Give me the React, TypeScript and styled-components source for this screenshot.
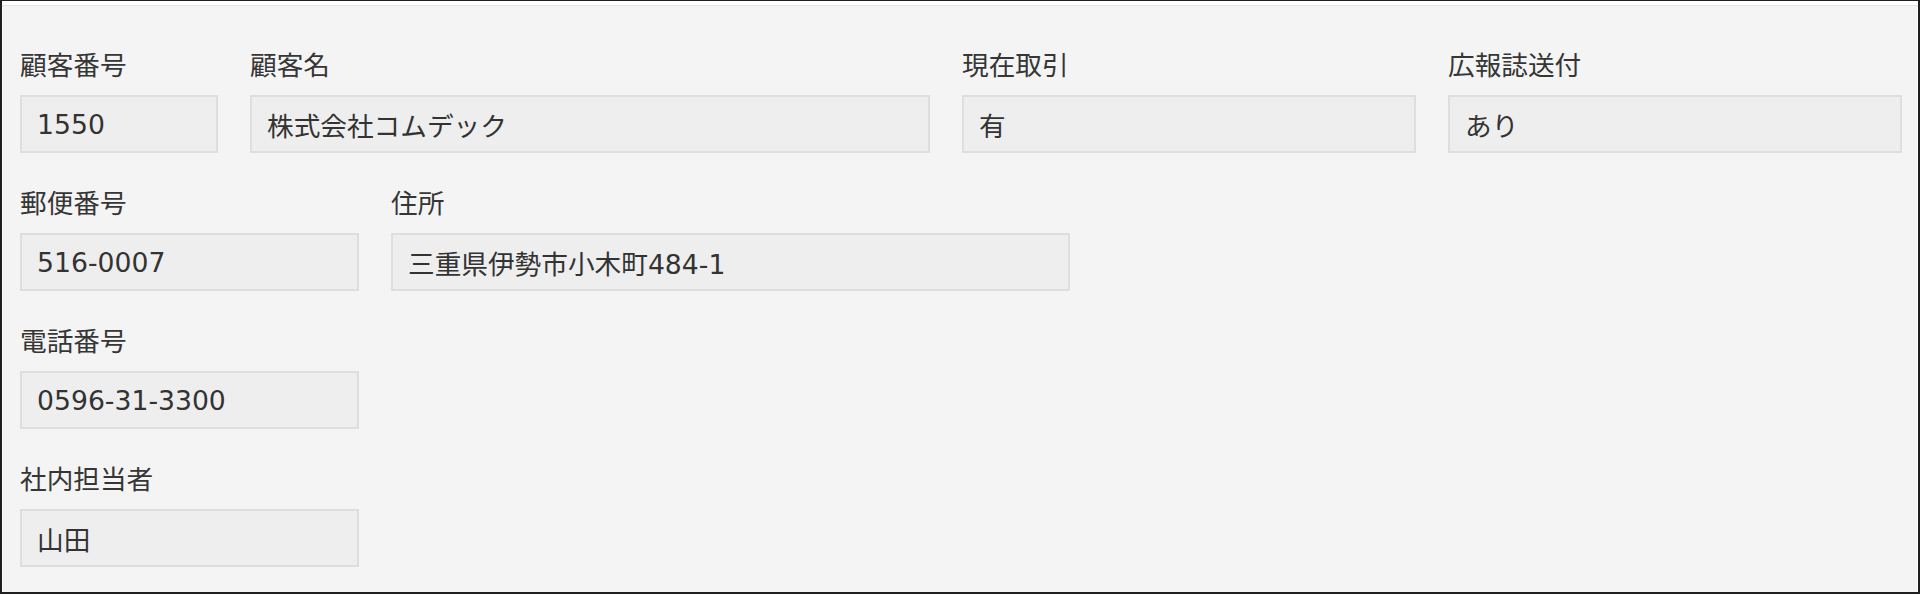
import React from "react";
import styled, { createGlobalStyle } from "styled-components";

const GlobalStyle = createGlobalStyle`
  html, body {
    margin: 0;
    padding: 0;
    background: #f4f4f4;
  }
  body {
    font-family: "DejaVu Sans", "Noto Sans CJK JP", sans-serif;
  }
`;

const Frame = styled.div`
  width: 1920px;
  height: 594px;
  box-sizing: border-box;
  border: 2px solid #1f1f1f;
  border-top-width: 1px;
  background: #f4f4f4;
  display: flex;
  flex-direction: column;
`;

const TopBand = styled.div`
  height: 4px;
  background: #ffffff;
  border-bottom: 1px solid #e4e4e4;
  flex: none;
`;

const Body = styled.div`
  flex: 1;
  border-left: 1px solid #fafafa;
  border-right: 1px solid #ffffff;
  padding: 42px 0 0 17px;
  display: flex;
  flex-direction: column;
  gap: 33px;
`;

const Row = styled.div`
  display: flex;
  gap: 32px;
`;

const Field = styled.div<{ $w: number }>`
  display: flex;
  flex-direction: column;
  width: ${(p) => p.$w}px;
  flex: none;
`;

const Label = styled.div`
  font-size: 26.67px;
  line-height: 36px;
  height: 36px;
  margin-bottom: 11px;
  color: #363636;
  white-space: nowrap;
`;

const Value = styled.div`
  height: 58px;
  box-sizing: border-box;
  border: 2px solid #dedede;
  background: #eeeeee;
  padding: 0 15px;
  display: flex;
  align-items: center;
  font-size: 26.67px;
  color: #333333;
  white-space: nowrap;
  overflow: hidden;
`;

type F = { label: string; value: string; w: number };

const rows: F[][] = [
  [
    { label: "顧客番号", value: "1550", w: 198 },
    { label: "顧客名", value: "株式会社コムデック", w: 680 },
    { label: "現在取引", value: "有", w: 454 },
    { label: "広報誌送付", value: "あり", w: 454 },
  ],
  [
    { label: "郵便番号", value: "516-0007", w: 339 },
    { label: "住所", value: "三重県伊勢市小木町484-1", w: 679 },
  ],
  [{ label: "電話番号", value: "0596-31-3300", w: 339 }],
  [{ label: "社内担当者", value: "山田", w: 339 }],
];

export default function App() {
  return (
    <>
      <GlobalStyle />
      <Frame>
        <TopBand />
        <Body>
          {rows.map((r, i) => (
            <Row key={i}>
              {r.map((f) => (
                <Field key={f.label} $w={f.w}>
                  <Label>{f.label}</Label>
                  <Value>{f.value}</Value>
                </Field>
              ))}
            </Row>
          ))}
        </Body>
      </Frame>
    </>
  );
}
